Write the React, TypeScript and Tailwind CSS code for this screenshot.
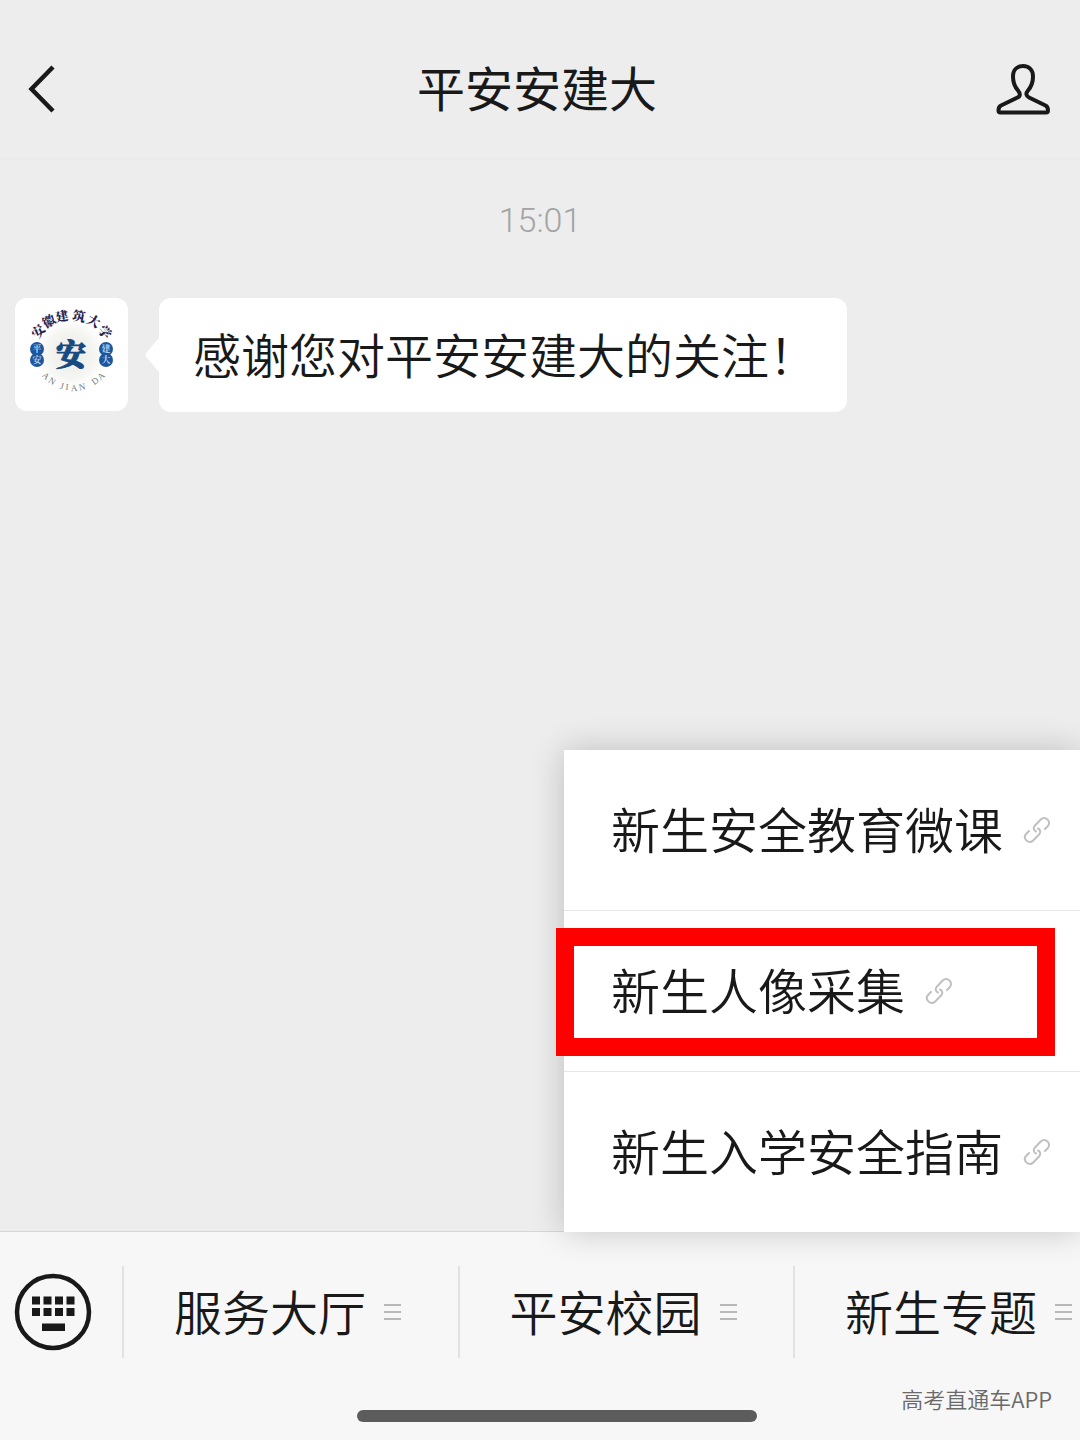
import React from "react";

const arcName = [
  { c: "安", x: 23, y: 33, r: -50 },
  { c: "徽", x: 34, y: 23, r: -30 },
  { c: "建", x: 47, y: 18, r: -10 },
  { c: "筑", x: 64, y: 18, r: 10 },
  { c: "大", x: 79, y: 23, r: 30 },
  { c: "学", x: 90, y: 34, r: 50 },
];

const arcLatin = [
  { c: "A", x: 31, y: 78, r: 42 },
  { c: "N", x: 37, y: 83, r: 34 },
  { c: "J", x: 47, y: 88, r: 14 },
  { c: "I", x: 52, y: 89, r: 6 },
  { c: "A", x: 59, y: 90, r: -3 },
  { c: "N", x: 67, y: 89, r: -12 },
  { c: "D", x: 80, y: 83, r: -36 },
  { c: "A", x: 86, y: 78, r: -44 },
];

const seals = [
  { x: 22, chars: ["平", "安"] },
  { x: 91, chars: ["建", "大"] },
];

function Avatar() {
  return (
    <svg viewBox="0 0 113 113" className="size-full" role="img" aria-label="平安安建大">
      <defs>
        <radialGradient id="halo">
          <stop offset="0" stopColor="#e9e9e6" />
          <stop offset="0.7" stopColor="#f5f5f2" />
          <stop offset="1" stopColor="#ffffff" />
        </radialGradient>
      </defs>
      <circle cx="56" cy="56" r="34" fill="url(#halo)" />
      <g fontFamily="'Noto Serif CJK SC', 'Noto Sans CJK SC', serif" textAnchor="middle">
        {arcName.map((g) => (
          <text key={g.c} transform={`translate(${g.x} ${g.y}) rotate(${g.r})`} y="5" fontSize="13" fontWeight="900" fill="#252250">
            {g.c}
          </text>
        ))}
        <text x="56" y="67" fontSize="30" fontWeight="900" fill="#174a80" stroke="#174a80" strokeWidth="1">
          安
        </text>
        {seals.map((s) => (
          <g key={s.x}>
            <circle cx={s.x} cy="51" r="7" fill="#1e569c" />
            <circle cx={s.x} cy="62" r="7" fill="#1e569c" />
            <text x={s.x} y="54" fontSize="9" fontWeight="700" fill="#bcd3ee">
              {s.chars[0]}
            </text>
            <text x={s.x} y="65" fontSize="9" fontWeight="700" fill="#bcd3ee">
              {s.chars[1]}
            </text>
          </g>
        ))}
      </g>
      <g fontFamily="'Liberation Serif', serif" textAnchor="middle" fontSize="9" fill="#77797c">
        {arcLatin.map((g, i) => (
          <text key={i} transform={`translate(${g.x} ${g.y}) rotate(${g.r})`} y="3">
            {g.c}
          </text>
        ))}
      </g>
    </svg>
  );
}

function LinkIcon() {
  return (
    <svg viewBox="0 0 28 28" className="size-7 shrink-0" fill="none" stroke="#c0c0c0" strokeWidth="2" strokeLinecap="round" aria-hidden="true">
      <path d="M13 15.500C10.500 14.500 10 11.500 12 9.500L17.500 3.800C19.500 1.800 22.300 1.500 24.500 3.500C26.700 5.700 26.500 8.500 24.500 10.500L22 13" />
      <path d="M15 12.500C17.500 13.500 18 16.500 16 18.500L10.500 24.200C8.500 26.200 5.700 26.500 3.500 24.500C1.300 22.300 1.500 19.500 3.500 17.500L6 15" />
    </svg>
  );
}

function BarsIcon() {
  return (
    <svg viewBox="0 0 17 18" className="h-[18px] w-[17px] shrink-0" stroke="#b8b8b8" strokeWidth="2" aria-hidden="true">
      <path d="M0 2h17M0 9h17M0 16h17" />
    </svg>
  );
}

function KeyboardIcon() {
  return (
    <svg viewBox="0 0 78 78" className="size-[78px]" aria-hidden="true">
      <circle cx="39" cy="39" r="36" fill="none" stroke="#191919" strokeWidth="4.500" />
      {[18, 29.500, 41, 52.500].map((x) => (
        <g key={x} fill="#191919">
          <rect x={x} y="23.500" width="8" height="8" />
          <rect x={x} y="35" width="8" height="8" />
        </g>
      ))}
      <rect x="28" y="50.500" width="23" height="7.500" fill="#191919" />
    </svg>
  );
}

const menu = [
  { label: "新生安全教育微课", marked: false },
  { label: "新生人像采集", marked: true },
  { label: "新生入学安全指南", marked: false },
];

const tabs = ["服务大厅", "平安校园", "新生专题"];

export default function App() {
  return (
    <div className="flex min-h-screen flex-col overflow-hidden bg-[#ededed] font-['Noto_Sans_CJK_SC',sans-serif] text-[#191919]">
      <header className="flex h-40 items-center justify-between border-b-2 border-[#eaeaea] px-7 pt-5">
        <button aria-label="返回" className="w-14">
          <svg viewBox="0 0 28 48" className="h-12 w-7" fill="none" stroke="#191919" strokeWidth="4.500" aria-hidden="true">
            <path d="M25 2L3.500 24L25 46" />
          </svg>
        </button>
        <h1 className="pr-1.5 pb-1.5 text-5xl leading-none">平安安建大</h1>
        <button aria-label="资料" className="w-14">
          <svg viewBox="0 0 56 52" className="h-[52px] w-14" fill="none" stroke="#191919" strokeWidth="4" strokeLinejoin="round" aria-hidden="true">
            <path d="M27 3C20.500 3 17 7.500 17 13.500C17 19.500 18.500 23.500 22 27.500C24.500 30.500 24.500 33 21.500 34.500L5 42.500C3 43.500 2.500 45 2.500 47.500Q2.500 49.500 4.500 49.500H50Q52 49.500 52 47.500C52 45 51.500 43.500 49.500 42.500L33 34.500C30 33 29.500 30.500 32 27.500C35.500 23.500 37 19.500 37 13.500C37 7.500 33.500 3 27 3Z" />
          </svg>
        </button>
      </header>

      <main className="flex-1 px-[15px] pt-9">
        <time className="block text-center font-[Roboto,sans-serif] text-[34px] leading-[48px] font-light text-[#a4a4a4]">15:01</time>
        <div className="mt-[54px] flex items-start gap-[31px]">
          <div className="size-[113px] shrink-0 overflow-hidden rounded-xl bg-white">
            <Avatar />
          </div>
          <div className="relative rounded-xl bg-white pt-[19px] pr-[30px] pb-[23px] pl-[34px]">
            <svg viewBox="0 0 14 34" className="absolute top-10 -left-3.5 h-[34px] w-3.5" fill="#ffffff" aria-hidden="true">
              <path d="M14 0V34L2 20Q-1 17 2 14Z" />
            </svg>
            <p className="text-5xl leading-[72px] font-[350]">感谢您对平安安建大的关注！</p>
          </div>
        </div>
      </main>

      <footer className="relative border-t border-[#d6d6d6] bg-[#f7f7f7] pt-[34px]">
        <nav className="flex items-center">
          <button aria-label="键盘" className="mr-[30px] ml-3.5 shrink-0">
            <KeyboardIcon />
          </button>
          {tabs.map((t) => (
            <button
              key={t}
              className="flex h-[92px] flex-1 items-center gap-[18px] border-l-2 border-[#e2e2e2] pl-[50px] text-5xl font-[350] whitespace-nowrap last:flex-none last:pr-2"
            >
              <span className="pb-1">{t}</span>
              <BarsIcon />
            </button>
          ))}
        </nav>
        <div className="relative flex h-[82px] justify-center pt-[52px] pl-[34px]">
          <div className="h-3 w-[400px] rounded-full bg-[#5c5c5c]" />
          <span className="absolute top-[22px] right-7 text-[22px] leading-9 font-[350] text-[#6a6a6a]">高考直通车APP</span>
        </div>

        <ul className="absolute right-0 bottom-full w-[516px] divide-y divide-[#e6e6e6] bg-white shadow-[0_0_32px_rgba(0,0,0,0.2)]">
          {menu.map((m) => (
            <li key={m.label} className="relative">
              <a href="#" className="flex h-40 items-center gap-5 pl-[47px] text-[49px] font-[350] whitespace-nowrap">
                <span className="pb-1">{m.label}</span>
                <LinkIcon />
              </a>
              {m.marked && <div className="absolute top-[17px] right-[25px] -left-2 h-32 border-[18px] border-[#ff0000]" />}
            </li>
          ))}
        </ul>
      </footer>
    </div>
  );
}
